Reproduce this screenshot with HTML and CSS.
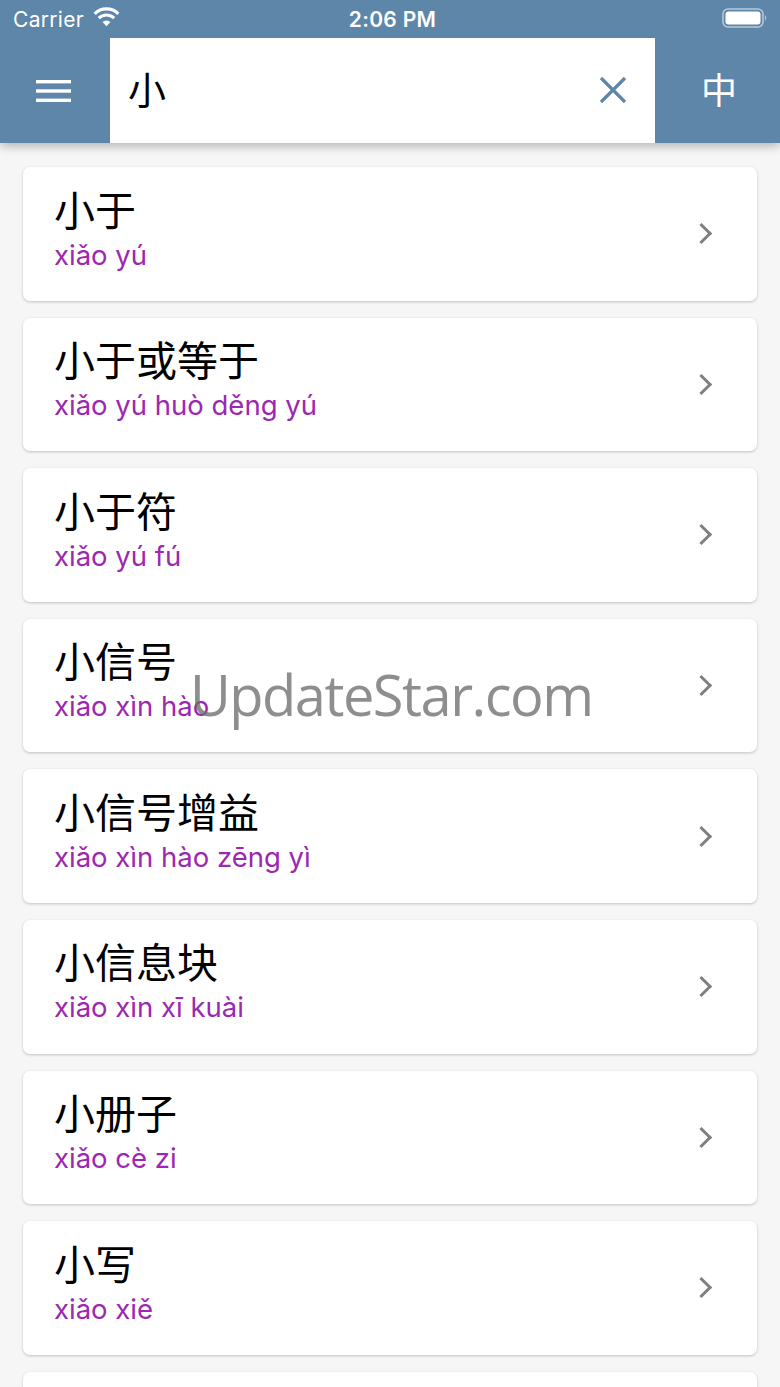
FILE: index.html
```html
<!DOCTYPE html>
<html lang="zh">
<head>
<meta charset="utf-8">
<title>小</title>
<link rel="stylesheet" href="styles.css">
</head>
<body>
<div class="app">
  <header class="header">
    <div class="status">
      <div class="status-left">
        <span class="carrier">Carrier</span>
        <svg class="wifi" width="27" height="20" viewBox="0 0 26 19">
          <path d="M13 18.5 L9.2 14.3 A5.6 5.6 0 0 1 16.8 14.3 Z" fill="#fff"/>
          <path d="M5.6 10.6 A10.6 10.6 0 0 1 20.4 10.6" stroke="#fff" stroke-width="3" fill="none" stroke-linecap="butt"/>
          <path d="M1.6 6.4 A16.2 16.2 0 0 1 24.4 6.4" stroke="#fff" stroke-width="3" fill="none"/>
        </svg>
      </div>
      <div class="time">2:06 PM</div>
      <div class="status-right">
        <svg class="battery" width="46" height="20" viewBox="0 0 46 20">
          <rect x="1" y="1" width="40" height="18" rx="5" fill="none" stroke="rgba(255,255,255,0.55)" stroke-width="1.6"/>
          <rect x="3.5" y="3.5" width="35" height="13" rx="3" fill="#fff"/>
          <path d="M43 7 Q45.5 10 43 13 Z" fill="rgba(255,255,255,0.55)"/>
        </svg>
      </div>
    </div>
    <div class="toolbar">
      <div class="menu-btn">
        <svg width="35" height="24" viewBox="0 0 35 24">
          <rect x="0" y="1" width="35" height="3.4" fill="#fff"/>
          <rect x="0" y="10.3" width="35" height="3.4" fill="#fff"/>
          <rect x="0" y="19.6" width="35" height="3.4" fill="#fff"/>
        </svg>
      </div>
      <div class="search">
        <span class="query">小</span>
        <svg class="clear" width="28" height="28" viewBox="0 0 28 28">
          <path d="M2 2 L26 26 M26 2 L2 26" stroke="#5e86a8" stroke-width="3.2" fill="none"/>
        </svg>
      </div>
      <div class="lang-btn">中</div>
    </div>
  </header>

  <main class="list">
    <div class="card"><div class="words"><div class="hanzi">小于</div><div class="pinyin">xiǎo yú</div></div><span class="chev"></span></div>
    <div class="card"><div class="words"><div class="hanzi">小于或等于</div><div class="pinyin">xiǎo yú huò děng yú</div></div><span class="chev"></span></div>
    <div class="card"><div class="words"><div class="hanzi">小于符</div><div class="pinyin">xiǎo yú fú</div></div><span class="chev"></span></div>
    <div class="card"><div class="words"><div class="hanzi">小信号</div><div class="pinyin">xiǎo xìn hào</div></div><span class="chev"></span></div>
    <div class="card"><div class="words"><div class="hanzi">小信号增益</div><div class="pinyin">xiǎo xìn hào zēng yì</div></div><span class="chev"></span></div>
    <div class="card"><div class="words"><div class="hanzi">小信息块</div><div class="pinyin">xiǎo xìn xī kuài</div></div><span class="chev"></span></div>
    <div class="card"><div class="words"><div class="hanzi">小册子</div><div class="pinyin">xiǎo cè zi</div></div><span class="chev"></span></div>
    <div class="card"><div class="words"><div class="hanzi">小写</div><div class="pinyin">xiǎo xiě</div></div><span class="chev"></span></div>
    <div class="card"></div>
  </main>

  <div class="watermark">UpdateStar.com</div>
</div>
</body>
</html>
```

FILE: styles.css
```css
* { box-sizing: border-box; }
html, body {
  margin: 0;
  padding: 0;
  background: #f6f6f6;
}
body {
  font-family: Inter, "Noto Sans", "Noto Sans CJK SC", sans-serif;
  width: 780px;
  height: 1387px;
  overflow: hidden;
}
.app {
  position: relative;
  width: 780px;
  height: 1387px;
  overflow: hidden;
}
.header {
  position: relative;
  z-index: 2;
  background: #5e86a8;
  box-shadow: 0 3px 10px rgba(0,0,0,0.28);
}
.status {
  height: 38px;
  display: flex;
  align-items: center;
  justify-content: space-between;
  padding: 0 12px 0 13px;
  color: #fff;
}
.status-left {
  display: flex;
  align-items: center;
  gap: 9px;
  width: 160px;
}
.carrier {
  font-size: 21px;
  letter-spacing: 0.3px;
}
.wifi { margin-top: -4px; }
.time {
  font-size: 21px;
  font-weight: 600;
  letter-spacing: 0.3px;
  padding-left: 4px;
}
.status-right {
  width: 160px;
  display: flex;
  justify-content: flex-end;
  margin-top: -2px;
}
.toolbar {
  height: 105px;
  display: flex;
}
.menu-btn {
  width: 110px;
  display: flex;
  align-items: center;
  justify-content: center;
  padding-right: 4px;
}
.search {
  width: 545px;
  background: #fff;
  display: flex;
  align-items: center;
  justify-content: space-between;
  padding: 0 28px 0 18px;
}
.query {
  font-family: "Noto Sans CJK SC", sans-serif;
  font-size: 38px;
  color: #000;
  margin-top: -6px;
}
.clear { margin-top: -2px; }
.lang-btn {
  flex: 1;
  display: flex;
  align-items: center;
  justify-content: center;
  color: #fff;
  font-family: "Noto Sans CJK SC", sans-serif;
  font-size: 36px;
  margin-top: -6px;
  padding-left: 3px;
}
.list {
  padding: 24px 23px 0;
  display: flex;
  flex-direction: column;
  gap: 17px;
}
.card {
  flex: none;
  height: 133.6px;
  background: #fff;
  border-radius: 7px;
  box-shadow: 0 1px 3px rgba(0,0,0,0.22);
  display: flex;
  align-items: center;
  justify-content: space-between;
  padding: 0 46px 0 31px;
}
.words {
  align-self: flex-start;
  display: flex;
  flex-direction: column;
  padding-top: 17.5px;
}
.hanzi {
  font-family: "Noto Sans CJK SC", sans-serif;
  font-size: 41px;
  line-height: 46px;
  color: #000;
}
.pinyin {
  font-family: Inter, "Noto Sans", sans-serif;
  font-size: 27.5px;
  line-height: 36px;
  margin-top: 6px;
  color: #9c27b0;
}
.chev {
  width: 15px;
  height: 15px;
  border-top: 3px solid #7f7f7f;
  border-right: 3px solid #7f7f7f;
  transform: rotate(45deg);
  margin-right: 2px;
}
.watermark {
  position: absolute;
  left: 190px;
  top: 656px;
  font-family: "Open Sans", sans-serif;
  font-size: 56px;
  color: rgba(110,110,110,0.78);
  letter-spacing: -1.5px;
  z-index: 3;
}
```
